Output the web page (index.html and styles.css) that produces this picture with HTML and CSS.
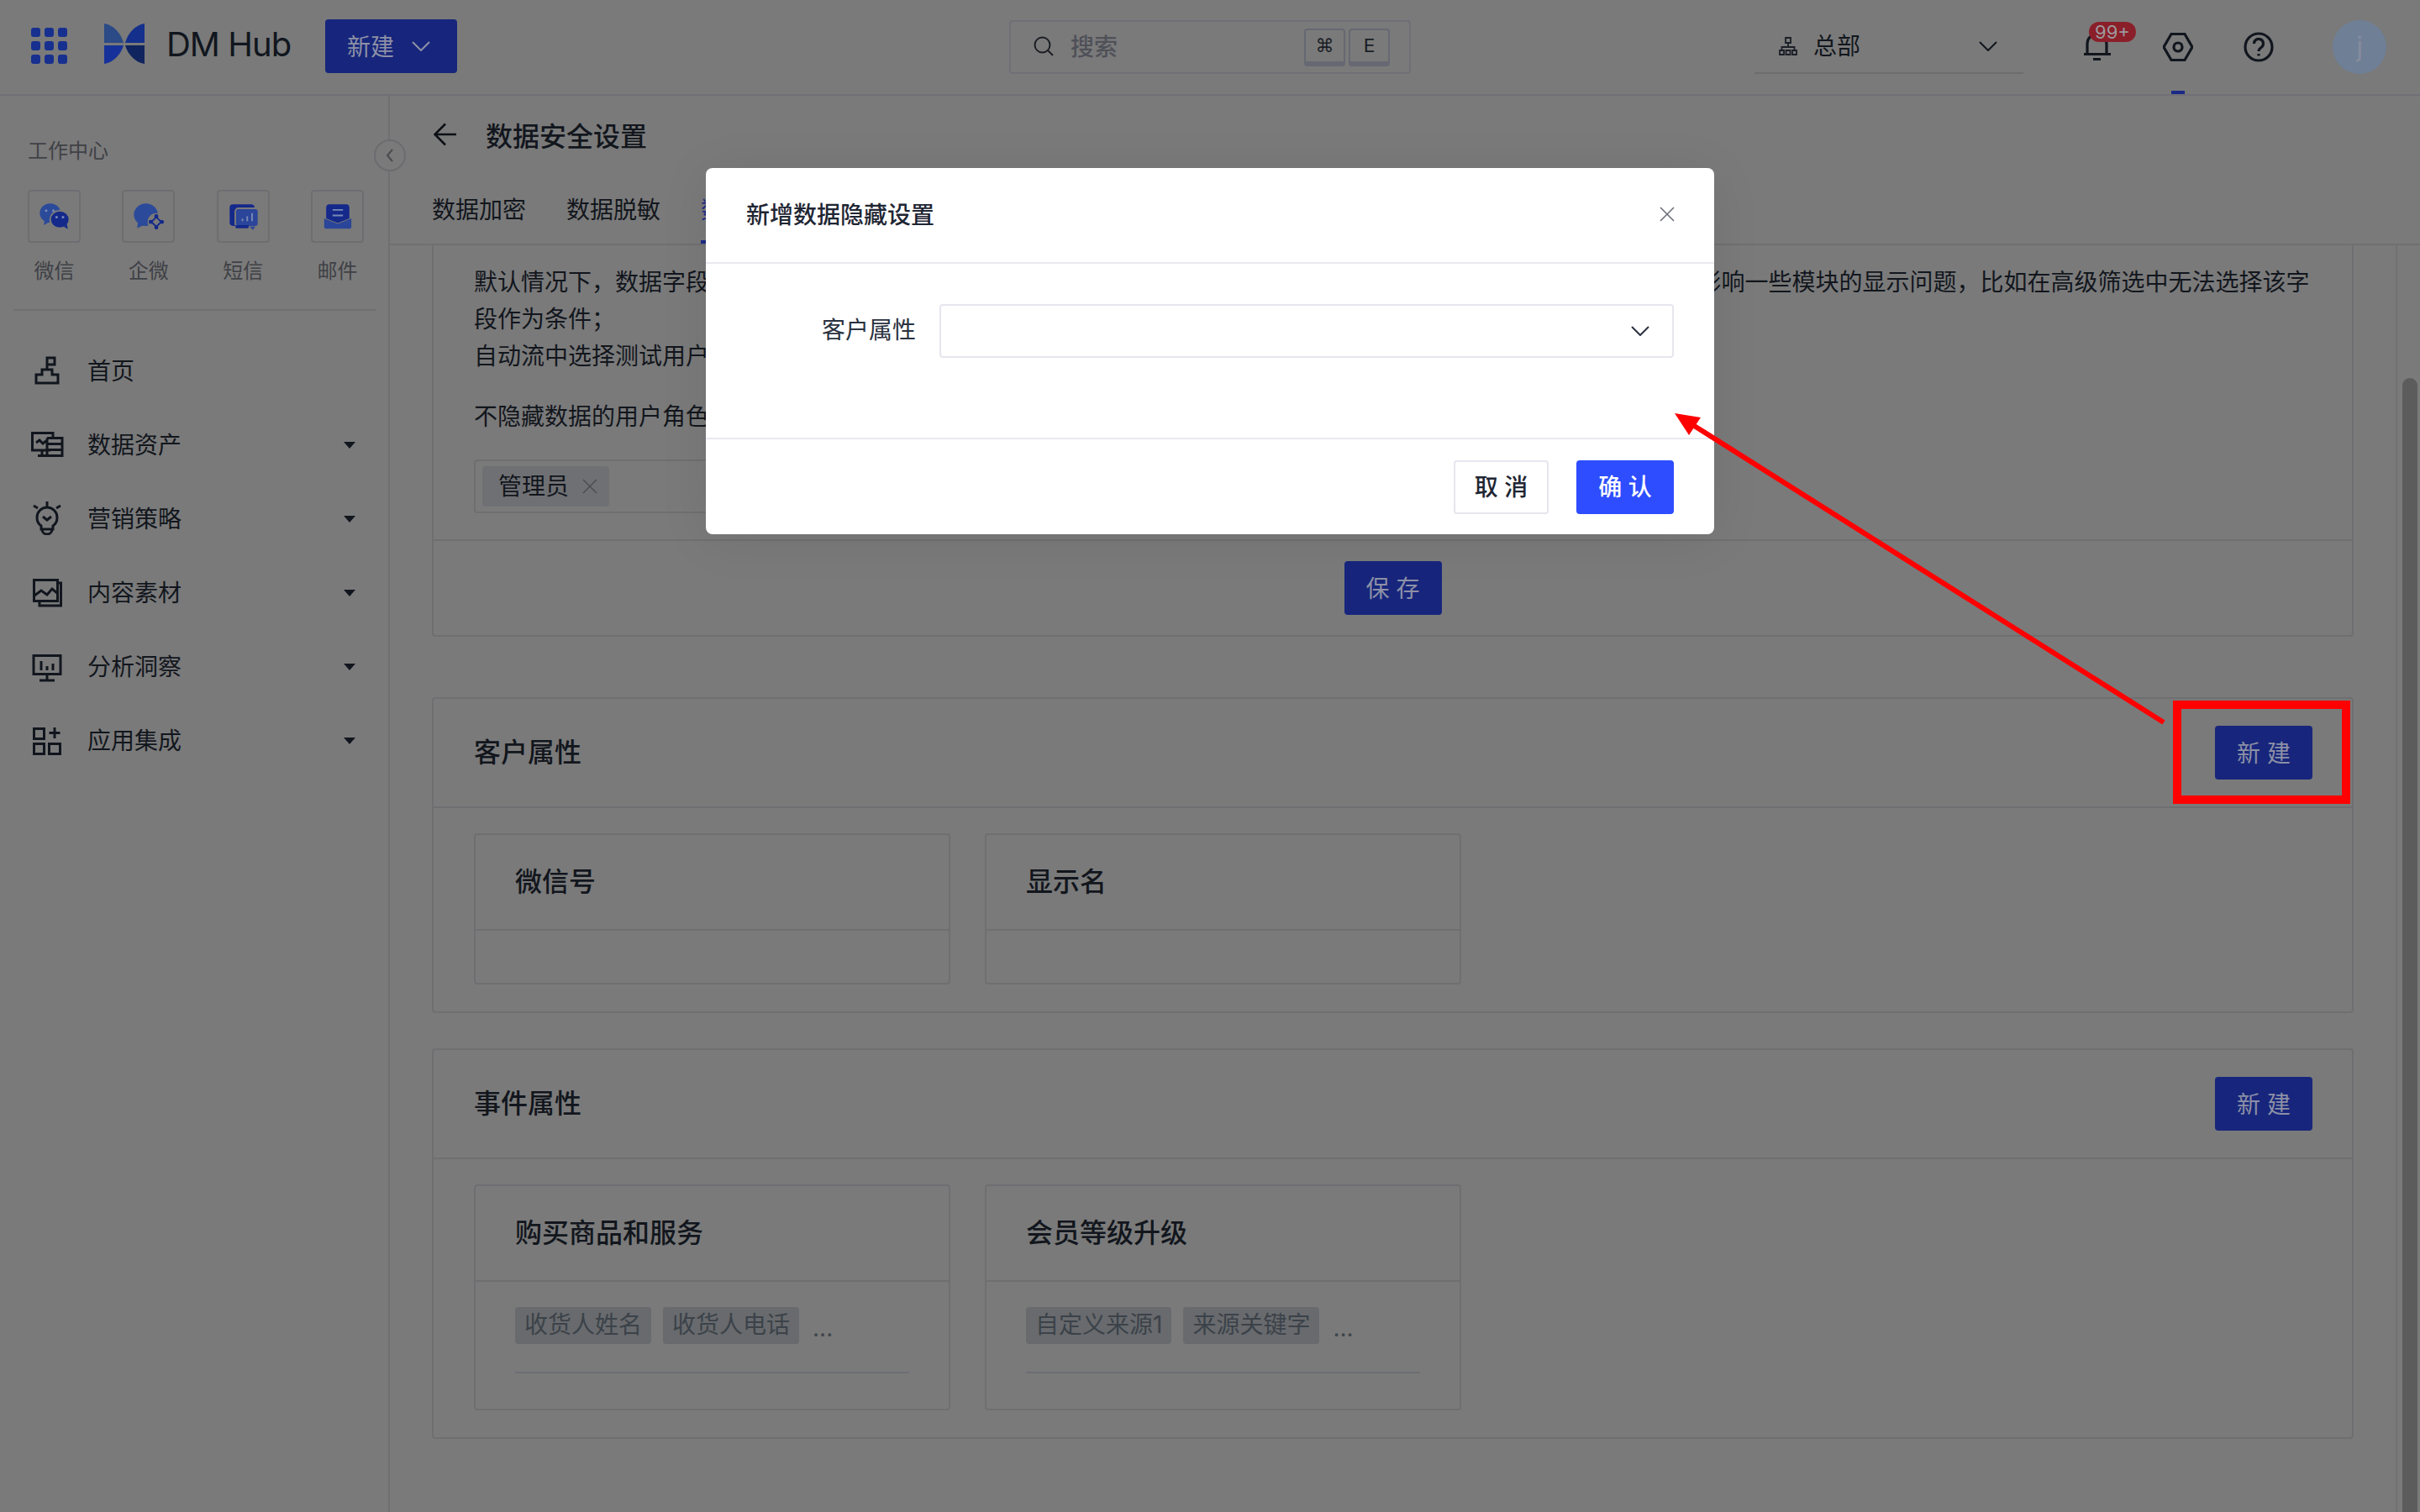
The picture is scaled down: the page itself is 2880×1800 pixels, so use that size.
FILE: index.html
```html
<!DOCTYPE html>
<html lang="zh-CN">
<head>
  <meta charset="UTF-8" />
  <title>DM Hub - 数据安全设置</title>
  <link rel="stylesheet" href="styles.css">
</head>
<body>

  <!-- 顶部栏 -->
  <header class="topbar">
    <svg class="apps-icon" viewBox="0 0 43 43">
      <rect x="0" y="0" width="11" height="11" rx="3"/><rect x="16" y="0" width="11" height="11" rx="3"/><rect x="32" y="0" width="11" height="11" rx="3"/>
      <rect x="0" y="16" width="11" height="11" rx="3"/><rect x="16" y="16" width="11" height="11" rx="3"/><rect x="32" y="16" width="11" height="11" rx="3"/>
      <rect x="0" y="32" width="11" height="11" rx="3"/><rect x="16" y="32" width="11" height="11" rx="3"/><rect x="32" y="32" width="11" height="11" rx="3"/>
    </svg>
    <svg class="logo" viewBox="0 0 48 48">
      <path fill="#2b4a86" d="M0 0C12 2 20 12 23 23H0Z"/>
      <path fill="#14308c" d="M48 0V23H25C28 12 36 2 48 0Z"/>
      <path fill="#16329a" d="M0 26H23C20 36 12 46 0 48Z"/>
      <path fill="#10245e" d="M25 26H48V48C36 46 28 36 25 26Z"/>
    </svg>
    <span class="brand">DM Hub</span>
    <button class="create-btn"><span class="btn-text">新建</span>
      <svg class="chevron" viewBox="0 0 22 12"><path d="M1 1l10 10L21 1"/></svg>
    </button>

    <div class="search">
      <svg class="search-icon" viewBox="0 0 24 24"><circle cx="10.5" cy="10.5" r="9"/><path d="M17 17l6 6"/></svg>
      <span class="search-text">搜索</span>
      <span class="kbd kbd-first">⌘</span>
      <span class="kbd">E</span>
    </div>

    <div class="org-select">
      <svg class="org-icon" viewBox="0 0 22 22">
        <path d="M8 1h6v6H8zM11 7v5M3.500 16v-4h15v4M1 16h5v5H1zM8.500 16h5v5h-5zM16 16h5v5h-5z"/>
      </svg>
      <span class="org-name">总部</span>
      <svg class="chevron org-chevron" viewBox="0 0 22 12"><path d="M1 1l10 10L21 1"/></svg>
    </div>

    <div class="bell">
      <svg class="tool-icon" viewBox="0 0 36 36"><path d="M6 26V14a11.500 11.500 0 0 1 23 0v12M2 26.500h32M13 32.500h9"/></svg>
      <span class="badge">99+</span>
    </div>
    <div class="tool tool-active">
      <svg class="tool-icon" viewBox="0 0 36 36"><path d="M10 2.500h16L35 18l-9 15.500H10L1 18z"/><circle cx="18" cy="18" r="5"/></svg>
    </div>
    <div class="tool">
      <svg class="tool-icon" viewBox="0 0 36 36"><circle cx="18" cy="18" r="16"/><path d="M12.500 14a5.500 5.500 0 1 1 8.500 4.500c-2 1.500-3 2.500-3 4.500M18 26v2.500"/></svg>
    </div>
    <div class="avatar">j</div>
  </header>

  <div class="layout">

    <!-- 左侧菜单 -->
    <aside class="sidebar">
      <div class="side-title">工作中心</div>
      <div class="channels">
        <div class="channel">
          <div class="channel-tile">
            <svg viewBox="0 0 62 62">
              <ellipse cx="26" cy="27" rx="13" ry="12" fill="#2b4a9a"/>
              <path d="M19 36l-1 6 7-4z" fill="#2b4a9a"/>
              <circle cx="21" cy="24" r="1.600" fill="#7a8ab5"/><circle cx="30" cy="24" r="1.600" fill="#7a8ab5"/>
              <ellipse cx="38" cy="35" rx="12" ry="11" fill="#14298a" stroke="#7a7a7a" stroke-width="2"/>
              <path d="M43 44l5 3-1-6z" fill="#14298a"/>
              <circle cx="34" cy="32" r="1.600" fill="#7a8ab5"/><circle cx="42" cy="32" r="1.600" fill="#7a8ab5"/>
            </svg>
          </div>
          <span>微信</span>
        </div>
        <div class="channel">
          <div class="channel-tile">
            <svg viewBox="0 0 62 62">
              <ellipse cx="28" cy="29" rx="15" ry="14" fill="#2b4a9a"/>
              <path d="M18 39l-1 7 8-4z" fill="#2b4a9a"/>
              <circle cx="41" cy="38" r="11" fill="#7a7a7a"/>
              <path d="M41 32l6 6-6 6-6-6z" fill="none" stroke="#14298a" stroke-width="2"/>
              <circle cx="41" cy="31" r="2.500" fill="#14298a"/><circle cx="48" cy="38" r="2.500" fill="#14298a"/>
              <circle cx="41" cy="45" r="2.500" fill="#14298a"/><circle cx="34" cy="38" r="2.500" fill="#14298a"/>
            </svg>
          </div>
          <span>企微</span>
        </div>
        <div class="channel">
          <div class="channel-tile">
            <svg viewBox="0 0 62 62">
              <rect x="14" y="16" width="31" height="27" rx="4" fill="#14298a"/>
              <rect x="21" y="21" width="29" height="23" rx="4" fill="#2a4599" stroke="#7a7a7a" stroke-width="2"/>
              <path d="M30 37v-3M36 37v-6M42 37v-10" stroke="#7a8ab5" stroke-width="2" fill="none"/>
              <path d="M39 44h7l-3 4z" fill="#2a4599"/>
              <rect x="21" y="42" width="17" height="4" rx="2" fill="#14298a"/>
            </svg>
          </div>
          <span>短信</span>
        </div>
        <div class="channel">
          <div class="channel-tile">
            <svg viewBox="0 0 62 62">
              <rect x="17" y="16" width="29" height="26" rx="4" fill="#14298a"/>
              <path d="M25 23h13M25 30h13" stroke="#7a8ab5" stroke-width="2" fill="none"/>
              <path d="M14 33l17.500 7L49 33v11a3 3 0 0 1-3 3H17a3 3 0 0 1-3-3z" fill="#2a4599" stroke="#7a7a7a" stroke-width="1"/>
            </svg>
          </div>
          <span>邮件</span>
        </div>
      </div>
      <div class="side-divider"></div>

      <nav class="menu">
        <a class="menu-item">
          <svg class="menu-icon" viewBox="0 0 40 40"><path d="M20 19V5h9v8h-9M7 35V25h7v-6h12v6h7v10z"/></svg>
          <span>首页</span>
        </a>
        <a class="menu-item has-sub">
          <svg class="menu-icon" viewBox="0 0 40 40"><path d="M24 27H2.500V6.500H27V12M20 12.500h18v21H9M20 19.500h18M20 26.500h18M20 12.500v21M14 27v6.500M7 18l4-3 4 4 5-4"/></svg>
          <span>数据资产</span>
        </a>
        <a class="menu-item has-sub">
          <svg class="menu-icon" viewBox="0 0 40 40"><path d="M20 0v6M4 5l5 3M36 5l-5 3M13 29c-3-2-5-6-5-10a12 12 0 0 1 24 0c0 4-2 8-5 10v4H13zM14 33c0 4 3 6 6 6s6-2 6-6M15 18l5 4 5-4"/></svg>
          <span>营销策略</span>
        </a>
        <a class="menu-item has-sub">
          <svg class="menu-icon" viewBox="0 0 40 40"><path d="M4.500 5.500h28v25h-28zM33 9h3.500v27H11v-5M5 24l8-6 7 5 6-7 6 5"/></svg>
          <span>内容素材</span>
        </a>
        <a class="menu-item has-sub">
          <svg class="menu-icon" viewBox="0 0 40 40"><path d="M4 7.500h32v22H4zM13 14v11M20 20v5M27 17v8M20 30v7M11 37h18"/></svg>
          <span>分析洞察</span>
        </a>
        <a class="menu-item has-sub">
          <svg class="menu-icon" viewBox="0 0 40 40"><path d="M4.500 6.500h12v12h-12zM4.500 24.500h12v12h-12zM22.500 24.500h13v12h-13zM29 5v13M22.500 11.500h13"/></svg>
          <span>应用集成</span>
        </a>
      </nav>

      <div class="collapse-btn">
        <svg viewBox="0 0 10 16"><path d="M8 1L2 8l6 7"/></svg>
      </div>
    </aside>

    <main class="main">
      <div class="page-head">
        <div class="page-title">
          <svg class="back-icon" viewBox="0 0 28 28"><path d="M27 14H2M14 1.500L1.500 14 14 26.500"/></svg>
          <h1>数据安全设置</h1>
        </div>
        <div class="tabs">
          <span class="tab">数据加密</span>
          <span class="tab">数据脱敏</span>
          <span class="tab tab-active">数据隐藏</span>
        </div>
      </div>

      <div class="scroll-area">
        <div class="content">

          <!-- 隐藏说明 -->
          <section class="card card-intro">
            <div class="intro-body">
              <p class="intro-text">默认情况下，数据字段隐藏后所有用户都无法查看明文，隐藏后的12个字段不会出现在页面和导出文件中，同时可能会影响一些模块的显示问题，比如在高级筛选中无法选择该字<br>段作为条件；<br>自动流中选择测试用户时，也不会展示被隐藏的字段内容。</p>
              <p class="intro-label">不隐藏数据的用户角色</p>
              <div class="role-select">
                <span class="role-tag"><span class="role-name">管理员</span>
                  <svg class="tag-close" viewBox="0 0 18 18"><path d="M1 1l16 16M17 1L1 17"/></svg>
                </span>
              </div>
            </div>
            <div class="intro-foot">
              <button class="btn-primary">保 存</button>
            </div>
          </section>

          <!-- 客户属性 -->
          <section class="card card-attrs">
            <div class="card-head">
              <h2>客户属性</h2>
              <button class="btn-primary">新 建</button>
            </div>
            <div class="sub-cards">
              <div class="sub-card">
                <div class="sub-head">微信号</div>
                <div class="sub-body-empty"></div>
              </div>
              <div class="sub-card">
                <div class="sub-head">显示名</div>
                <div class="sub-body-empty"></div>
              </div>
            </div>
          </section>

          <!-- 事件属性 -->
          <section class="card card-attrs">
            <div class="card-head">
              <h2>事件属性</h2>
              <button class="btn-primary">新 建</button>
            </div>
            <div class="sub-cards">
              <div class="sub-card">
                <div class="sub-head">购买商品和服务</div>
                <div class="sub-body">
                  <div class="attr-list">
                    <span class="attr-tag">收货人姓名</span>
                    <span class="attr-tag">收货人电话</span>
                    <span class="attr-more">...</span>
                  </div>
                </div>
              </div>
              <div class="sub-card">
                <div class="sub-head">会员等级升级</div>
                <div class="sub-body">
                  <div class="attr-list">
                    <span class="attr-tag">自定义来源1</span>
                    <span class="attr-tag">来源关键字</span>
                    <span class="attr-more">...</span>
                  </div>
                </div>
              </div>
            </div>
          </section>

        </div>
        <div class="scrollbar"><div class="scroll-thumb"></div></div>
      </div>
    </main>
  </div>

  <!-- 新增弹窗 -->
  <div class="modal">
    <div class="modal-head">
      <span class="modal-title">新增数据隐藏设置</span>
      <svg class="modal-close" viewBox="0 0 18 18"><path d="M1 1l16 16M17 1L1 17"/></svg>
    </div>
    <div class="modal-body">
      <label class="field-label">客户属性</label>
      <div class="field-select">
        <svg class="chevron" viewBox="0 0 22 12"><path d="M1 1l10 10L21 1"/></svg>
      </div>
    </div>
    <div class="modal-foot">
      <button class="btn-cancel">取 消</button>
      <button class="btn-confirm">确 认</button>
    </div>
  </div>

  <!-- 红色标注 -->
  <div class="mark-box"></div>
  <svg class="mark-arrow" viewBox="0 0 2880 1800">
    <path class="mark-line" d="M2575 860L2010 503"/>
    <path class="mark-head" d="M1993 492L2024 497L2010 518Z"/>
  </svg>

</body>
</html>
```

FILE: styles.css
```css
* {
  box-sizing: border-box;
  margin: 0;
  padding: 0;
}

body {
  width: 2880px;
  height: 1800px;
  overflow: hidden;
  position: relative;
  font-family: Inter, "Noto Sans CJK SC", sans-serif;
  font-size: 28px;
  color: #12161d;
  background-color: #7a7a7a;
}

button {
  font-family: inherit;
  border: none;
}

svg {
  display: block;
  flex: none;
}

/* 顶部栏 */
.topbar {
  display: flex;
  align-items: center;
  height: 114px;
  padding-left: 37px;
  border-bottom: 2px solid #6f6f76;
}

.apps-icon {
  width: 43px;
  height: 43px;
  margin-bottom: 3px;
  fill: #17308f;
}

.logo {
  width: 48px;
  height: 48px;
  margin: 0 0 8px 44px;
}

.brand {
  width: 150px;
  margin: 0 0 7px 26px;
  font-size: 40px;
  letter-spacing: -1px;
  color: #11161e;
}

.chevron {
  width: 22px;
  height: 12px;
  fill: none;
  stroke: currentColor;
  stroke-width: 2;
}

.create-btn {
  display: flex;
  align-items: center;
  gap: 21px;
  width: 157px;
  height: 64px;
  margin: 0 0 2px 39px;
  padding-left: 26px;
  font-size: 28px;
  color: #8d90a6;
  background-color: #17267c;
  border-radius: 4px;
}

.btn-text {
  margin-bottom: 3px;
}

.search {
  display: flex;
  align-items: center;
  width: 478px;
  height: 64px;
  margin-left: 657px;
  padding-left: 27px;
  border: 2px solid #6f6f76;
  border-radius: 4px;
}

.search-icon {
  width: 24px;
  height: 24px;
  margin-bottom: 2px;
  fill: none;
  stroke: #1c1e24;
  stroke-width: 2;
}

.search-text {
  margin: 0 0 4px 20px;
  color: #4f5058;
  font-weight: 500;
}

.kbd {
  display: flex;
  align-items: center;
  justify-content: center;
  width: 49px;
  height: 45px;
  margin-left: 4px;
  font-family: "DejaVu Sans", sans-serif;
  font-size: 22px;
  color: #1b1e25;
  border: 2px solid #666873;
  border-bottom-width: 6px;
  border-radius: 4px;
}

.kbd-first {
  margin-left: auto;
}

.search .kbd:last-child {
  margin-right: 23px;
}

.org-select {
  display: flex;
  align-items: center;
  width: 320px;
  height: 64px;
  margin-left: 409px;
  padding-left: 29px;
  border-bottom: 2px solid #6d6d70;
}

.org-icon {
  width: 22px;
  height: 22px;
  fill: none;
  stroke: #1a1e26;
  stroke-width: 1.800;
}

.org-name {
  margin: 0 0 4px 19px;
}

.org-chevron {
  margin-left: auto;
  margin-right: 31px;
}

.bell,
.tool {
  position: relative;
  width: 36px;
  height: 36px;
}

.bell {
  margin-left: 70px;
}

.tool {
  margin-left: 60px;
}

.tool-icon {
  width: 36px;
  height: 36px;
  fill: none;
  stroke: #11161e;
  stroke-width: 3.200;
}

.badge {
  position: absolute;
  left: 8px;
  top: -12px;
  width: 56px;
  height: 24px;
  font-size: 22px;
  line-height: 24px;
  text-align: center;
  color: #9d9a9c;
  background-color: #8a1f2a;
  border-radius: 12px;
}

.tool-active::after {
  content: "";
  position: absolute;
  left: 10px;
  top: 70px;
  width: 16px;
  height: 4px;
  background-color: #1b2a85;
}

.avatar {
  width: 64px;
  height: 64px;
  margin-left: 70px;
  font-size: 32px;
  line-height: 64px;
  text-align: center;
  color: #858c9c;
  background-color: #6f7f96;
  border-radius: 50%;
}

.layout {
  display: flex;
  height: 1686px;
}

/* 左侧菜单 */
.sidebar {
  position: relative;
  width: 464px;
  flex: none;
  padding-top: 50px;
  border-right: 2px solid #6f6f72;
}

.side-title {
  padding-left: 33px;
  font-size: 24px;
  line-height: 32px;
  color: #3f4146;
}

.channels {
  display: flex;
  justify-content: space-between;
  width: 400px;
  margin: 30px 0 0 33px;
}

.channel {
  width: 63px;
  font-size: 24px;
  line-height: 32px;
  text-align: center;
  color: #3f4146;
}

.channel span {
  display: block;
  margin-top: 18px;
}

.channel-tile {
  width: 63px;
  height: 63px;
  border: 2px solid #6e6e72;
  border-radius: 4px;
}

.channel-tile svg {
  width: 59px;
  height: 59px;
}

.side-divider {
  height: 2px;
  margin: 29px 14px 0 16px;
  background-color: #6f6f72;
}

.menu {
  margin-top: 27px;
}

.menu-item {
  display: flex;
  align-items: center;
  gap: 28px;
  height: 88px;
  padding: 0 39px 0 36px;
}

.menu-item span {
  margin-bottom: 3px;
}

.menu-icon {
  width: 40px;
  height: 40px;
  fill: none;
  stroke: #11161e;
  stroke-width: 3;
}

.has-sub::after {
  content: "";
  margin: 2px 0 0 auto;
  border-style: solid;
  border-width: 8px 7px 0;
  border-color: #11161e transparent transparent;
}

.collapse-btn {
  position: absolute;
  left: 445px;
  top: 52px;
  display: flex;
  align-items: center;
  justify-content: center;
  width: 38px;
  height: 38px;
  background-color: #7a7a7a;
  border: 2px solid #6c6c70;
  border-radius: 50%;
}

.collapse-btn svg {
  width: 10px;
  height: 16px;
  fill: none;
  stroke: #4a4b50;
  stroke-width: 2;
}

/* 内容区 */
.main {
  flex: 1;
  display: flex;
  flex-direction: column;
  min-width: 0;
}

.page-head {
  height: 178px;
  padding: 26px 0 0 51px;
  border-bottom: 2px solid #6f6f72;
}

.page-title {
  display: flex;
  align-items: center;
  gap: 34px;
  height: 40px;
}

.back-icon {
  width: 28px;
  height: 28px;
  margin-left: 1px;
  fill: none;
  stroke: #0c0f14;
  stroke-width: 2.500;
}

.page-title h1 {
  font-size: 32px;
  font-weight: 500;
}

.tabs {
  display: flex;
  gap: 48px;
  margin: 50px 0 0 -1px;
}

.tab {
  height: 60px;
  line-height: 40px;
}

.tab-active {
  color: #1b2a85;
  border-bottom: 4px solid #1b2a85;
}

.scroll-area {
  flex: 1;
  display: flex;
  min-height: 0;
}

.content {
  flex: 1;
  padding: 0 50px;
  overflow: hidden;
}

.card {
  border: 2px solid #6f6f72;
  border-radius: 4px;
}

.card-intro {
  border-top: none;
  border-radius: 0 0 4px 4px;
}

.intro-body {
  height: 352px;
  padding: 22px 48px 0;
  border-bottom: 2px solid #6f6f72;
}

.intro-text {
  line-height: 44px;
  white-space: nowrap;
}

.intro-label {
  margin-top: 28px;
  line-height: 44px;
}

.role-select {
  display: flex;
  align-items: center;
  width: 1000px;
  height: 64px;
  margin-top: 29px;
  padding-left: 8px;
  border: 2px solid #6f6f72;
  border-radius: 4px;
}

.role-tag {
  display: flex;
  align-items: center;
  gap: 16px;
  height: 48px;
  padding: 0 14px 0 19px;
  background-color: #6f7073;
  border-radius: 4px;
}

.role-name {
  margin-bottom: 5px;
}

.tag-close {
  width: 18px;
  height: 18px;
  fill: none;
  stroke: #4c4d52;
  stroke-width: 1.500;
}

.intro-foot {
  display: flex;
  align-items: center;
  justify-content: center;
  height: 112px;
}

.btn-primary {
  width: 116px;
  height: 64px;
  padding-bottom: 3px;
  font-size: 28px;
  color: #8d90a6;
  background-color: #17267c;
  border-radius: 4px;
}

.card-attrs {
  margin-top: 42px;
}

.card-intro + .card-attrs {
  margin-top: 72px;
}

.card-head {
  display: flex;
  align-items: center;
  justify-content: space-between;
  height: 130px;
  padding: 0 47px 0 48px;
  border-bottom: 2px solid #6f6f72;
}

.card-head h2 {
  margin-bottom: 6px;
  font-size: 32px;
  font-weight: 500;
}

.sub-cards {
  display: flex;
  gap: 41px;
  padding: 30px 48px 32px;
}

.sub-card {
  width: 567px;
  border: 2px solid #6f6f72;
  border-radius: 4px;
}

.sub-head {
  height: 114px;
  padding-left: 47px;
  font-size: 32px;
  font-weight: 500;
  line-height: 112px;
  border-bottom: 2px solid #6f6f72;
}

.sub-body-empty {
  height: 62px;
}

.sub-body {
  padding: 30px 47px 42px;
}

.attr-list {
  display: flex;
  align-items: flex-end;
  gap: 14px;
  padding-bottom: 33px;
  border-bottom: 2px solid #6c6e72;
}

.attr-tag {
  height: 44px;
  padding: 0 11px;
  line-height: 42px;
  color: #3b4249;
  background-color: #686a6d;
  border-radius: 4px;
}

.attr-more {
  margin-left: 2px;
  line-height: 38px;
  color: #40454c;
}

.scrollbar {
  width: 29px;
  flex: none;
  padding: 158px 0 0 6px;
  border-left: 2px solid #717174;
}

.scroll-thumb {
  width: 18px;
  height: 1400px;
  background-color: #5c5c5c;
  border-radius: 9px;
}

/* 弹窗 */
.modal {
  position: absolute;
  left: 840px;
  top: 200px;
  width: 1200px;
  height: 436px;
  display: flex;
  flex-direction: column;
  color: #1f2633;
  background-color: #fff;
  border-radius: 8px;
  box-shadow: 0 6px 60px rgba(0, 0, 0, 0.08);
}

.modal-head {
  display: flex;
  align-items: center;
  justify-content: space-between;
  height: 114px;
  padding: 0 47px 0 48px;
  border-bottom: 2px solid #e9e9ee;
}

.modal-title {
  margin-bottom: 5px;
  font-weight: 500;
}

.modal-close {
  width: 18px;
  height: 18px;
  margin-bottom: 3px;
  fill: none;
  stroke: #6a6e78;
  stroke-width: 1.500;
}

.modal-body {
  display: flex;
  align-items: flex-start;
  height: 209px;
  padding: 48px 48px 0 138px;
  border-bottom: 2px solid #e9e9ee;
}

.field-label {
  width: 112px;
  margin-right: 28px;
  line-height: 62px;
  white-space: nowrap;
  color: #2a3240;
}

.field-select {
  display: flex;
  align-items: center;
  justify-content: flex-end;
  width: 874px;
  height: 64px;
  padding-right: 27px;
  color: #2a3240;
  border: 2px solid #e6e6ee;
  border-radius: 4px;
}

.modal-foot {
  display: flex;
  justify-content: flex-end;
  gap: 33px;
  padding: 25px 48px 0 0;
}

.btn-cancel,
.btn-confirm {
  height: 64px;
  padding-bottom: 5px;
  font-size: 28px;
  font-weight: 500;
  border-radius: 4px;
}

.btn-cancel {
  width: 113px;
  color: #1f2633;
  background-color: #fff;
  border: 2px solid #e6e6ee;
}

.btn-confirm {
  width: 116px;
  color: #fff;
  background-color: #2d4dff;
}

/* 标注 */
.mark-box {
  position: absolute;
  left: 2586px;
  top: 834px;
  width: 211px;
  height: 123px;
  border: 10px solid #f00;
}

.mark-arrow {
  position: absolute;
  left: 0;
  top: 0;
  width: 2880px;
  height: 1800px;
  pointer-events: none;
}

.mark-line {
  fill: none;
  stroke: #f00;
  stroke-width: 6;
}

.mark-head {
  fill: #f00;
}
```
